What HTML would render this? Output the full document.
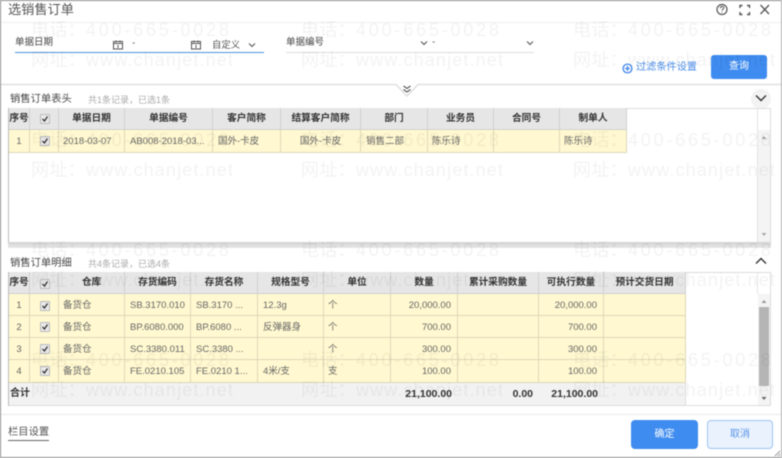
<!DOCTYPE html>
<html lang="zh">
<head>
<meta charset="utf-8">
<style>
html,body{margin:0;padding:0;background:#fff}
body{width:782px;height:458px;overflow:hidden;position:relative;font-family:"Liberation Sans","Noto Sans CJK SC",sans-serif;color:#555}
.a{position:absolute;white-space:nowrap}
#wrap{position:absolute;left:0;top:0;width:782px;height:458px;filter:blur(.45px);overflow:hidden}
.cell{position:absolute;box-sizing:border-box;white-space:nowrap;overflow:hidden;font-size:9.5px;line-height:22px;padding:0 3px;border-right:1px solid #dcd8b8;border-bottom:1px solid #dcd8b8;background:#fff8d0;color:#666}
.cell:not(.hd){line-height:23px}
.hd{background:#e6e6e6;border-right:1px solid #d0d0d0;border-bottom:1px solid #d0d0d0;color:#333;font-weight:bold;font-size:9.7px;text-align:center;padding:0}
.c{text-align:center;padding:0}
.r{text-align:right;padding-right:6px}
.wm{position:absolute;white-space:nowrap;font-size:18px;line-height:24px;color:rgba(0,0,0,.05);pointer-events:none}
.wm i{font-style:normal;letter-spacing:.33px}
.wm b{font-weight:normal;letter-spacing:2.8px}
.wm u{text-decoration:none;letter-spacing:1.13px}
.cb{position:absolute;width:8px;height:8px;border:1px solid #bbb;background:#e9e9e9;border-radius:1px}
.cb svg{position:absolute;left:0;top:0}
svg{display:block}
</style>
</head>
<body>
<div id="wrap">
<!-- window borders -->
<div class="a" style="left:0;top:0;width:782px;height:1px;background:#8a8a8a"></div>
<div class="a" style="left:0;top:0;width:1px;height:458px;background:#8a8a8a"></div>
<div class="a" style="left:0;top:457px;width:782px;height:1px;background:#8a8a8a"></div>
<div class="a" style="left:781px;top:0;width:1px;height:458px;background:#aaa"></div>

<!-- title -->
<div class="a" style="left:8px;top:0;font-size:13.2px;line-height:20px;color:#555">选销售订单</div>
<div class="a" style="left:1px;top:22px;width:780px;height:1px;background:#eee"></div>
<svg class="a" style="left:715px;top:2px" width="60" height="16" viewBox="0 0 60 16" fill="none" stroke="#555">
<circle cx="7" cy="7.500" r="5" stroke-width="1.200"/>
<path d="M5.300 6.200c0-2.200 3.500-2.200 3.500-.2 0 1.200-1.800 1.200-1.800 2.700M7 10v.8" stroke-width="1"/>
<path d="M25 6V3.500h2.500M32 3.500h2.500V6M34.500 10v2.500H32M27.500 12.500H25V10" stroke-width="1.400"/>
<path d="M45.500 3l8.500 9M54 3l-8.500 9" stroke-width="1.300"/>
</svg>

<!-- search form -->
<div class="a" style="left:15px;top:36px;font-size:9.5px;line-height:14px;color:#444">单据日期</div>
<svg class="a" style="left:113px;top:40px" width="11" height="10" viewBox="0 0 11 10" fill="none" stroke="#555"><rect x=".5" y="1.500" width="9" height="7.500"/><path d="M.5 3.500h9M3 .5v2M7 .5v2M5 5v3" stroke-width="1"/></svg>
<div class="a" style="left:132px;top:38px;font-size:10px;line-height:12px;color:#666">-</div>
<svg class="a" style="left:191px;top:40px" width="11" height="10" viewBox="0 0 11 10" fill="none" stroke="#555"><rect x=".5" y="1.500" width="9" height="7.500"/><path d="M.5 3.500h9M3 .5v2M7 .5v2M5 5v3" stroke-width="1"/></svg>
<div class="a" style="left:212px;top:38px;font-size:9.4px;line-height:14px;color:#555">自定义</div>
<svg class="a" style="left:248px;top:42px" width="8" height="6" viewBox="0 0 8 6" fill="none" stroke="#555" stroke-width="1.100"><path d="M1 1.500l3 3 3-3"/></svg>
<div class="a" style="left:15px;top:51.500px;width:249px;height:1.300px;background:#4a90d9"></div>

<div class="a" style="left:286px;top:36px;font-size:9.5px;line-height:14px;color:#444">单据编号</div>
<svg class="a" style="left:420px;top:40px" width="8" height="6" viewBox="0 0 8 6" fill="none" stroke="#555" stroke-width="1.100"><path d="M1 1.500l3 3 3-3"/></svg>
<div class="a" style="left:432px;top:37px;font-size:10px;line-height:12px;color:#666">-</div>
<svg class="a" style="left:526px;top:40px" width="8" height="6" viewBox="0 0 8 6" fill="none" stroke="#555" stroke-width="1.100"><path d="M1 1.500l3 3 3-3"/></svg>
<div class="a" style="left:286px;top:52px;width:248px;height:1px;background:#ddd"></div>

<svg class="a" style="left:622px;top:63px" width="11" height="11" viewBox="0 0 11 11" fill="none" stroke="#3f86ea" stroke-width="1.300"><circle cx="5.500" cy="5.500" r="4.400"/><path d="M3 5.500h5M5.500 3v5"/></svg>
<div class="a" style="left:636px;top:61px;font-size:10.2px;line-height:14px;color:#4a8ce8">过滤条件设置</div>
<div class="a" style="left:711px;top:55px;width:56px;height:24px;border-radius:3px;background:#3f8cf0;color:#fff;font-size:10px;line-height:23px;text-align:center">查询</div>

<!-- separator with notch -->
<svg class="a" style="left:0;top:82px" width="782" height="16" viewBox="0 0 782 16" fill="none">
<path d="M1 2.500H396L407 14 418 2.500H781" stroke="#e0e0e0" stroke-width="1.600"/>
<path d="M403.500 5l3.500 2.500 3.500-2.500M403.500 8.500l3.500 2.500 3.500-2.500" stroke="#555" stroke-width="1.100" transform="translate(0,-1)"/>
</svg>

<!-- top table -->
<div class="a" style="left:10px;top:93px;font-size:10.3px;line-height:14px;color:#444">销售订单表头</div>
<div class="a" style="left:88px;top:93px;font-size:9px;line-height:14px;color:#aaa">共1条记录，已选1条</div>
<div class="a" style="left:751px;top:89px;width:20px;height:20px;border-radius:50%;background:#f3f3f3"></div>
<svg class="a" style="left:755px;top:94px" width="12" height="8" viewBox="0 0 12 8" fill="none" stroke="#333" stroke-width="1.400"><path d="M1 1.500l5 5 5-5"/></svg>

<div class="a" style="left:8px;top:108px;width:763px;height:134px;box-sizing:border-box;border:1px solid #ddd;border-bottom:0"></div>
<div class="a" style="left:8px;top:108px;width:1px;height:134px;background:#bbb"></div>
<div class="a" style="left:757px;top:108px;width:1px;height:134px;background:#e4e4e4"></div>
<div class="a" style="left:758px;top:130px;width:12px;height:112px;background:#f4f4f4"></div>
<svg class="a" style="left:758px;top:134px" width="12" height="8" viewBox="0 0 12 8"><path d="M6 2l2.500 3h-5z" fill="#aaa"/></svg>
<svg class="a" style="left:758px;top:231px" width="12" height="8" viewBox="0 0 12 8"><path d="M6 5l2.500-3h-5z" fill="#aaa"/></svg>
<div class="a" style="left:8px;top:242px;width:763px;height:6px;background:linear-gradient(#d2d2d2,#e8e8e8)"></div>

<div class="cell hd" style="left:9px;top:108px;width:21px;height:22px">序号</div>
<div class="cell hd" style="left:30px;top:108px;width:29px;height:22px"></div>
<div class="cell hd" style="left:59px;top:108px;width:66px;height:22px">单据日期</div>
<div class="cell hd" style="left:125px;top:108px;width:88px;height:22px">单据编号</div>
<div class="cell hd" style="left:213px;top:108px;width:68px;height:22px">客户简称</div>
<div class="cell hd" style="left:281px;top:108px;width:80px;height:22px">结算客户简称</div>
<div class="cell hd" style="left:361px;top:108px;width:67px;height:22px">部门</div>
<div class="cell hd" style="left:428px;top:108px;width:66px;height:22px">业务员</div>
<div class="cell hd" style="left:494px;top:108px;width:66px;height:22px">合同号</div>
<div class="cell hd" style="left:560px;top:108px;width:67px;height:22px">制单人</div>

<div class="cell c" style="left:9px;top:130px;width:21px;height:23px">1</div>
<div class="cell" style="left:30px;top:130px;width:29px;height:23px"></div>
<div class="cell" style="left:59px;top:130px;width:66px;height:23px;padding-left:4px">2018-03-07</div>
<div class="cell" style="left:125px;top:130px;width:88px;height:23px;padding-left:5px">AB008-2018-03...</div>
<div class="cell" style="left:213px;top:130px;width:68px;height:23px;padding-left:5px">国外-卡皮</div>
<div class="cell c" style="left:281px;top:130px;width:80px;height:23px">国外-卡皮</div>
<div class="cell" style="left:361px;top:130px;width:67px;height:23px;padding-left:5px">销售二部</div>
<div class="cell" style="left:428px;top:130px;width:66px;height:23px;padding-left:4px">陈乐诗</div>
<div class="cell" style="left:494px;top:130px;width:66px;height:23px"></div>
<div class="cell" style="left:560px;top:130px;width:67px;height:23px;padding-left:4px">陈乐诗</div>

<div class="cb" style="left:40px;top:114px"><svg width="8" height="8" viewBox="0 0 8 8" fill="none" stroke="#333" stroke-width="1.300"><path d="M1.500 4l2 2 3-4.500"/></svg></div>
<div class="cb" style="left:40px;top:136px"><svg width="8" height="8" viewBox="0 0 8 8" fill="none" stroke="#333" stroke-width="1.300"><path d="M1.500 4l2 2 3-4.500"/></svg></div>

<!-- detail table -->
<div class="a" style="left:10px;top:257px;font-size:10.3px;line-height:14px;color:#444">销售订单明细</div>
<div class="a" style="left:88px;top:257px;font-size:9px;line-height:14px;color:#aaa">共4条记录，已选4条</div>
<svg class="a" style="left:755px;top:257px" width="12" height="8" viewBox="0 0 12 8" fill="none" stroke="#333" stroke-width="1.400"><path d="M1 6.500l5-5 5 5"/></svg>

<div class="a" style="left:8px;top:272px;width:763px;height:134px;box-sizing:border-box;border:1px solid #ddd"></div>
<div class="a" style="left:8px;top:272px;width:1px;height:134px;background:#bbb"></div>
<div class="a" style="left:757px;top:272px;width:1px;height:22px;background:#e4e4e4"></div>
<div class="a" style="left:758px;top:294px;width:12px;height:111px;background:#f4f4f4"></div>
<div class="a" style="left:759px;top:307px;width:10px;height:79px;background:#b5b5b5"></div>
<svg class="a" style="left:758px;top:298px" width="12" height="8" viewBox="0 0 12 8"><path d="M6 2l2.500 3h-5z" fill="#999"/></svg>
<svg class="a" style="left:758px;top:394px" width="12" height="8" viewBox="0 0 12 8"><path d="M6 6L8.500 3h-5z" fill="#666"/></svg>

<div class="cell hd" style="left:9px;top:272px;width:21px;height:22px">序号</div>
<div class="cell hd" style="left:30px;top:272px;width:29px;height:22px"></div>
<div class="cell hd" style="left:59px;top:272px;width:66px;height:22px">仓库</div>
<div class="cell hd" style="left:125px;top:272px;width:66px;height:22px">存货编码</div>
<div class="cell hd" style="left:191px;top:272px;width:67px;height:22px">存货名称</div>
<div class="cell hd" style="left:258px;top:272px;width:66px;height:22px">规格型号</div>
<div class="cell hd" style="left:324px;top:272px;width:67px;height:22px">单位</div>
<div class="cell hd" style="left:391px;top:272px;width:67px;height:22px">数量</div>
<div class="cell hd" style="left:458px;top:272px;width:81px;height:22px">累计采购数量</div>
<div class="cell hd" style="left:539px;top:272px;width:65px;height:22px">可执行数量</div>
<div class="cell hd" style="left:604px;top:272px;width:82px;height:22px">预计交货日期</div>

<!-- row 1 -->
<div class="cell c" style="left:9px;top:294px;width:21px;height:22px">1</div>
<div class="cell" style="left:30px;top:294px;width:29px;height:22px"></div>
<div class="cell" style="left:59px;top:294px;width:66px;height:22px;padding-left:4px">备货仓</div>
<div class="cell" style="left:125px;top:294px;width:66px;height:22px;padding-left:5px">SB.3170.010</div>
<div class="cell" style="left:191px;top:294px;width:67px;height:22px;padding-left:5px">SB.3170 ...</div>
<div class="cell" style="left:258px;top:294px;width:66px;height:22px;padding-left:5px">12.3g</div>
<div class="cell" style="left:324px;top:294px;width:67px;height:22px;padding-left:4px">个</div>
<div class="cell r" style="left:391px;top:294px;width:67px;height:22px">20,000.00</div>
<div class="cell" style="left:458px;top:294px;width:81px;height:22px"></div>
<div class="cell r" style="left:539px;top:294px;width:65px;height:22px">20,000.00</div>
<div class="cell" style="left:604px;top:294px;width:82px;height:22px"></div>
<!-- row 2 -->
<div class="cell c" style="left:9px;top:316px;width:21px;height:22px">2</div>
<div class="cell" style="left:30px;top:316px;width:29px;height:22px"></div>
<div class="cell" style="left:59px;top:316px;width:66px;height:22px;padding-left:4px">备货仓</div>
<div class="cell" style="left:125px;top:316px;width:66px;height:22px;padding-left:5px">BP.6080.000</div>
<div class="cell" style="left:191px;top:316px;width:67px;height:22px;padding-left:5px">BP.6080 ...</div>
<div class="cell" style="left:258px;top:316px;width:66px;height:22px;padding-left:5px">反弹器身</div>
<div class="cell" style="left:324px;top:316px;width:67px;height:22px;padding-left:4px">个</div>
<div class="cell r" style="left:391px;top:316px;width:67px;height:22px">700.00</div>
<div class="cell" style="left:458px;top:316px;width:81px;height:22px"></div>
<div class="cell r" style="left:539px;top:316px;width:65px;height:22px">700.00</div>
<div class="cell" style="left:604px;top:316px;width:82px;height:22px"></div>
<!-- row 3 -->
<div class="cell c" style="left:9px;top:338px;width:21px;height:22px">3</div>
<div class="cell" style="left:30px;top:338px;width:29px;height:22px"></div>
<div class="cell" style="left:59px;top:338px;width:66px;height:22px;padding-left:4px">备货仓</div>
<div class="cell" style="left:125px;top:338px;width:66px;height:22px;padding-left:5px">SC.3380.011</div>
<div class="cell" style="left:191px;top:338px;width:67px;height:22px;padding-left:5px">SC.3380 ...</div>
<div class="cell" style="left:258px;top:338px;width:66px;height:22px"></div>
<div class="cell" style="left:324px;top:338px;width:67px;height:22px;padding-left:4px">个</div>
<div class="cell r" style="left:391px;top:338px;width:67px;height:22px">300.00</div>
<div class="cell" style="left:458px;top:338px;width:81px;height:22px"></div>
<div class="cell r" style="left:539px;top:338px;width:65px;height:22px">300.00</div>
<div class="cell" style="left:604px;top:338px;width:82px;height:22px"></div>
<!-- row 4 -->
<div class="cell c" style="left:9px;top:360px;width:21px;height:23px">4</div>
<div class="cell" style="left:30px;top:360px;width:29px;height:23px"></div>
<div class="cell" style="left:59px;top:360px;width:66px;height:23px;padding-left:4px">备货仓</div>
<div class="cell" style="left:125px;top:360px;width:66px;height:23px;padding-left:5px">FE.0210.105</div>
<div class="cell" style="left:191px;top:360px;width:67px;height:23px;padding-left:5px">FE.0210 1...</div>
<div class="cell" style="left:258px;top:360px;width:66px;height:23px;padding-left:5px">4米/支</div>
<div class="cell" style="left:324px;top:360px;width:67px;height:23px;padding-left:4px">支</div>
<div class="cell r" style="left:391px;top:360px;width:67px;height:23px">100.00</div>
<div class="cell" style="left:458px;top:360px;width:81px;height:23px"></div>
<div class="cell r" style="left:539px;top:360px;width:65px;height:23px">100.00</div>
<div class="cell" style="left:604px;top:360px;width:82px;height:23px"></div>

<!-- total -->
<div class="a" style="left:9px;top:383px;width:677px;height:22px;background:#f2f2f2;border-right:1px solid #ddd;box-sizing:border-box"></div>
<div class="a" style="left:10px;top:383px;font-size:10px;font-weight:bold;line-height:22px;color:#333">合计</div>
<div class="a" style="left:391px;top:383px;width:61px;text-align:right;font-size:10.5px;font-weight:bold;line-height:22px;color:#333">21,100.00</div>
<div class="a" style="left:458px;top:383px;width:75px;text-align:right;font-size:10.5px;font-weight:bold;line-height:22px;color:#333">0.00</div>
<div class="a" style="left:539px;top:383px;width:59px;text-align:right;font-size:10.5px;font-weight:bold;line-height:22px;color:#333">21,100.00</div>

<div class="cb" style="left:40px;top:279px"><svg width="8" height="8" viewBox="0 0 8 8" fill="none" stroke="#333" stroke-width="1.300"><path d="M1.500 4l2 2 3-4.500"/></svg></div>
<div class="cb" style="left:40px;top:301px"><svg width="8" height="8" viewBox="0 0 8 8" fill="none" stroke="#333" stroke-width="1.300"><path d="M1.500 4l2 2 3-4.500"/></svg></div>
<div class="cb" style="left:40px;top:322px"><svg width="8" height="8" viewBox="0 0 8 8" fill="none" stroke="#333" stroke-width="1.300"><path d="M1.500 4l2 2 3-4.500"/></svg></div>
<div class="cb" style="left:40px;top:344px"><svg width="8" height="8" viewBox="0 0 8 8" fill="none" stroke="#333" stroke-width="1.300"><path d="M1.500 4l2 2 3-4.500"/></svg></div>
<div class="cb" style="left:40px;top:366px"><svg width="8" height="8" viewBox="0 0 8 8" fill="none" stroke="#333" stroke-width="1.300"><path d="M1.500 4l2 2 3-4.500"/></svg></div>

<!-- footer -->
<div class="a" style="left:1px;top:414px;width:780px;height:1px;background:#eaeaea"></div>
<div class="a" style="left:8px;top:426px;font-size:10.3px;line-height:14px;color:#555;border-bottom:1px solid #666">栏目设置</div>
<div class="a" style="left:631px;top:420px;width:67px;height:29px;border-radius:4px;background:#3f8cf0;color:#fff;font-size:10px;line-height:29px;text-align:center">确定</div>
<div class="a" style="left:707px;top:420px;width:66px;height:29px;box-sizing:border-box;border-radius:4px;background:#e9f2fd;border:1px solid #9cc3f0;color:#5a94e6;font-size:10px;line-height:27px;text-align:center">取消</div>
<svg class="a" style="left:774px;top:450px" width="7" height="7" viewBox="0 0 7 7" fill="none" stroke="#999"><path d="M6 1L1 6M6 4L4 6"/></svg>

<!-- watermark -->
<div class="wm" style="left:31px;top:18px"><i>电话：</i><b>400-665-0028</b></div>
<div class="wm" style="left:301px;top:18px"><i>电话：</i><b>400-665-0028</b></div>
<div class="wm" style="left:573px;top:18px"><i>电话：</i><b>400-665-0028</b></div>
<div class="wm" style="left:31px;top:48px"><i>网址：</i><u>www.chanjet.net</u></div>
<div class="wm" style="left:301px;top:48px"><i>网址：</i><u>www.chanjet.net</u></div>
<div class="wm" style="left:573px;top:48px"><i>网址：</i><u>www.chanjet.net</u></div>
<div class="wm" style="left:31px;top:128px"><i>电话：</i><b>400-665-0028</b></div>
<div class="wm" style="left:301px;top:128px"><i>电话：</i><b>400-665-0028</b></div>
<div class="wm" style="left:573px;top:128px"><i>电话：</i><b>400-665-0028</b></div>
<div class="wm" style="left:31px;top:158px"><i>网址：</i><u>www.chanjet.net</u></div>
<div class="wm" style="left:301px;top:158px"><i>网址：</i><u>www.chanjet.net</u></div>
<div class="wm" style="left:573px;top:158px"><i>网址：</i><u>www.chanjet.net</u></div>
<div class="wm" style="left:31px;top:238px"><i>电话：</i><b>400-665-0028</b></div>
<div class="wm" style="left:301px;top:238px"><i>电话：</i><b>400-665-0028</b></div>
<div class="wm" style="left:573px;top:238px"><i>电话：</i><b>400-665-0028</b></div>
<div class="wm" style="left:31px;top:268px"><i>网址：</i><u>www.chanjet.net</u></div>
<div class="wm" style="left:301px;top:268px"><i>网址：</i><u>www.chanjet.net</u></div>
<div class="wm" style="left:573px;top:268px"><i>网址：</i><u>www.chanjet.net</u></div>
<div class="wm" style="left:31px;top:348px"><i>电话：</i><b>400-665-0028</b></div>
<div class="wm" style="left:301px;top:348px"><i>电话：</i><b>400-665-0028</b></div>
<div class="wm" style="left:573px;top:348px"><i>电话：</i><b>400-665-0028</b></div>
<div class="wm" style="left:31px;top:378px"><i>网址：</i><u>www.chanjet.net</u></div>
<div class="wm" style="left:301px;top:378px"><i>网址：</i><u>www.chanjet.net</u></div>
<div class="wm" style="left:573px;top:378px"><i>网址：</i><u>www.chanjet.net</u></div>
</div>
</body>
</html>
